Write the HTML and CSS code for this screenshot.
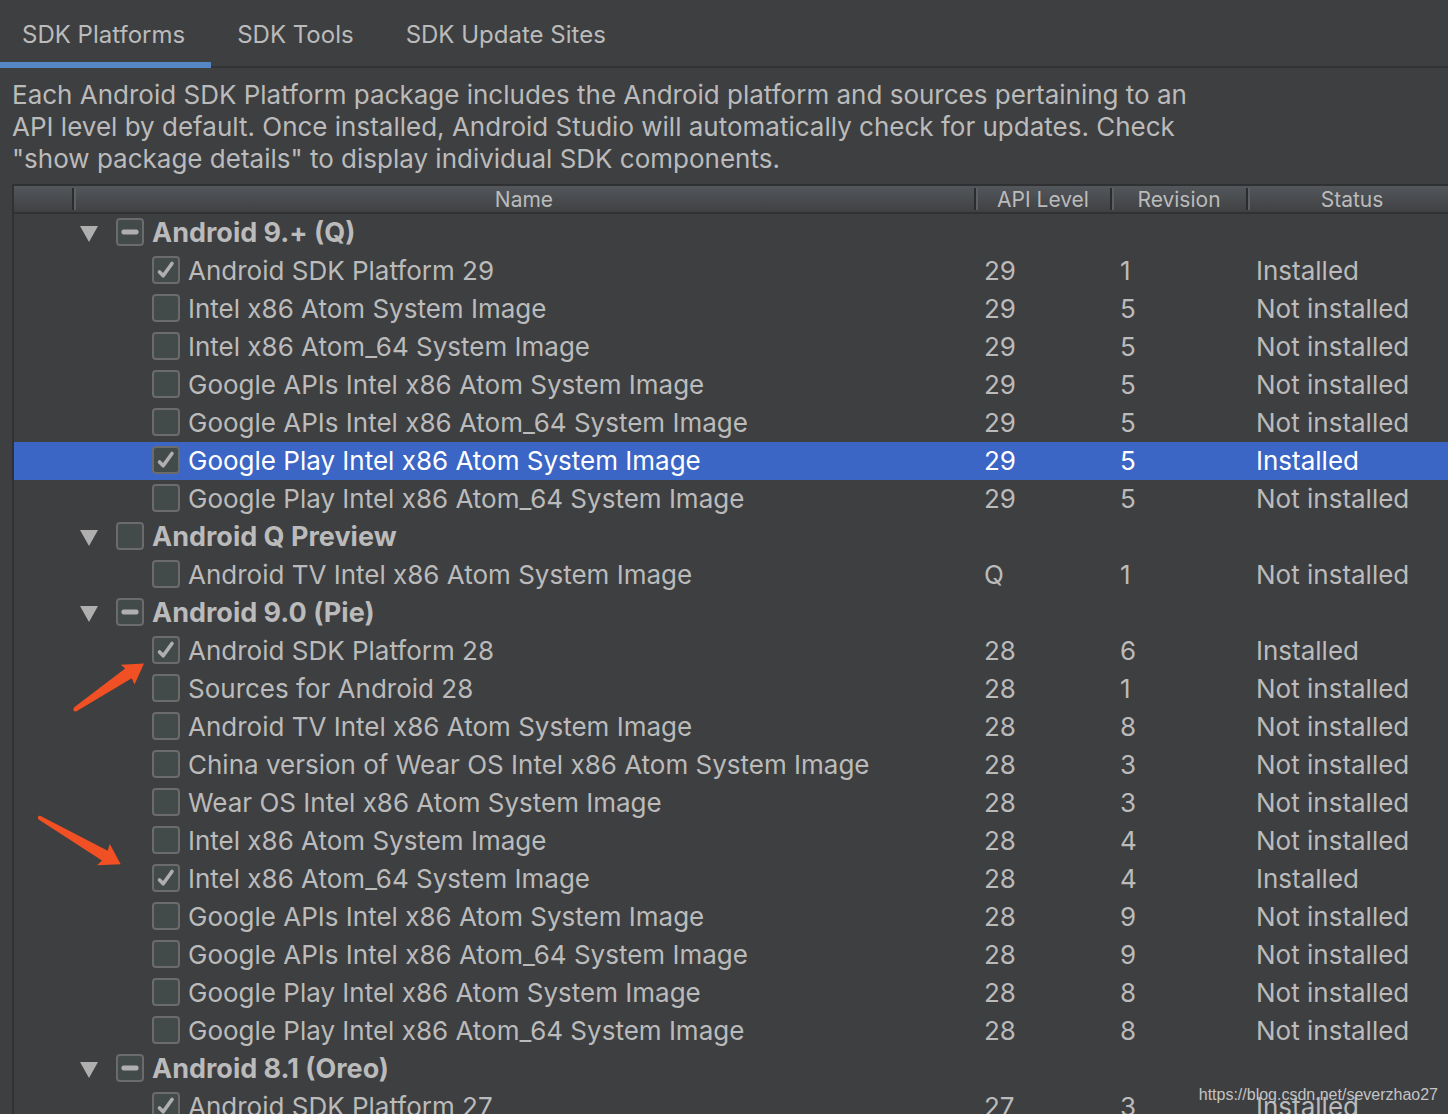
FILE: index.html
```html
<!DOCTYPE html>
<html lang="en">
<head>
<meta charset="utf-8">
<title>Android SDK</title>
<link rel="stylesheet" href="styles.css">
</head>
<body>
<main class="panel">
  <div class="tabs" role="tablist">
    <button class="tab tab-active" role="tab" aria-selected="true">SDK Platforms</button>
    <button class="tab" role="tab" aria-selected="false">SDK Tools</button>
    <button class="tab" role="tab" aria-selected="false">SDK Update Sites</button>
  </div>
  <p class="intro">Each Android SDK Platform package includes the Android platform and sources pertaining to an API level by default. Once installed, Android Studio will automatically check for updates. Check "show package details" to display individual SDK components.</p>
  <div class="table-frame">
    <table class="packages">
      <colgroup><col class="col-gutter"><col><col class="col-api"><col class="col-revision"><col class="col-status"></colgroup>
      <thead>
        <tr><th></th><th>Name</th><th>API Level</th><th>Revision</th><th>Status</th></tr>
      </thead>
      <tbody id="rows"></tbody>
    </table>
  </div>
</main>
<svg class="arrow arrow-platform" width="80" height="56" viewBox="0 0 80 56" aria-hidden="true"><path d="M74 7.5 50.700 8.700 55.200 12.400 4.200 51.200Q2.600 53 3.600 54.600 4.800 56 6.500 55.200L61.700 22.200 64.500 28.500Z"/></svg>
<svg class="arrow arrow-image" width="90" height="56" viewBox="0 0 90 56" aria-hidden="true"><path d="M85.700 52.300 74.700 31.700 72.700 38.700 5.200 3.800Q3.600 3.400 2.900 4.900 2.500 6.300 3.600 7.400L67 48.400 62 53.300Z"/></svg>
<div class="watermark">https://blog.csdn.net/severzhao27</div>
<script src="rows.js"></script>
</body>
</html>
```
FILE: rows.js
```js
const groups = [
  { name: "Android 9.+ (Q)", mixed: true, items: [
    ["Android SDK Platform 29", "29", 1, true],
    ["Intel x86 Atom System Image", "29", 5],
    ["Intel x86 Atom_64 System Image", "29", 5],
    ["Google APIs Intel x86 Atom System Image", "29", 5],
    ["Google APIs Intel x86 Atom_64 System Image", "29", 5],
    ["Google Play Intel x86 Atom System Image", "29", 5, true, true],
    ["Google Play Intel x86 Atom_64 System Image", "29", 5]
  ] },
  { name: "Android Q Preview", mixed: false, items: [
    ["Android TV Intel x86 Atom System Image", "Q", 1]
  ] },
  { name: "Android 9.0 (Pie)", mixed: true, items: [
    ["Android SDK Platform 28", "28", 6, true],
    ["Sources for Android 28", "28", 1],
    ["Android TV Intel x86 Atom System Image", "28", 8],
    ["China version of Wear OS Intel x86 Atom System Image", "28", 3],
    ["Wear OS Intel x86 Atom System Image", "28", 3],
    ["Intel x86 Atom System Image", "28", 4],
    ["Intel x86 Atom_64 System Image", "28", 4, true],
    ["Google APIs Intel x86 Atom System Image", "28", 9],
    ["Google APIs Intel x86 Atom_64 System Image", "28", 9],
    ["Google Play Intel x86 Atom System Image", "28", 8],
    ["Google Play Intel x86 Atom_64 System Image", "28", 8]
  ] },
  { name: "Android 8.1 (Oreo)", mixed: true, items: [
    ["Android SDK Platform 27", "27", 3, true]
  ] }
];

const triangle = '<svg width="18" height="16" viewBox="0 0 18 16"><path d="M0 0H18L9 16Z"/></svg>';
let html = "";
groups.forEach((group, g) => {
  html += `<tr class="group"><td></td><td><div class="name"><button class="toggle" aria-label="Collapse" aria-expanded="true">${triangle}</button>` +
    `<input class="check" type="checkbox" id="g${g}"${group.mixed ? ' data-mixed' : ''}><label for="g${g}">${group.name}</label></div></td><td></td><td></td><td></td></tr>`;
  group.items.forEach(([name, api, revision, installed, selected], i) => {
    const id = `p${g}-${i}`;
    html += `<tr${selected ? ' class="selected"' : ''}><td></td><td><div class="name child"><input class="check" type="checkbox" id="${id}"${installed ? ' checked' : ''}>` +
      `<label for="${id}">${name}</label></div></td><td>${api}</td><td>${revision}</td><td>${installed ? 'Installed' : 'Not installed'}</td></tr>`;
  });
});
document.getElementById("rows").innerHTML = html;
document.querySelectorAll("[data-mixed]").forEach(box => { box.indeterminate = true; });
```
FILE: styles.css
```css
* { box-sizing: border-box; }

body {
  margin: 0;
  height: 100vh;
  overflow: hidden;
  position: relative;
  background: #3e3f41;
  color: #bbbbbb;
  font-family: Inter, "Liberation Sans", sans-serif;
  font-size: 26px;
}

.panel { height: 100%; overflow: hidden; }

.tabs {
  display: flex;
  height: 68px;
  border-bottom: 2px solid #323335;
}

.tab {
  height: 68px;
  padding: 0 26px;
  border: 0;
  background: none;
  color: inherit;
  font-family: inherit;
  font-size: 24px;
  white-space: nowrap;
}

.tab-active {
  padding-left: 22px;
  box-shadow: inset 0 -6px #5587c5;
}

.intro {
  max-width: 1224px;
  margin: 0;
  padding: 11px 12px 9px;
  line-height: 32px;
}

.table-frame {
  margin-left: 12px;
  border: solid #303133;
  border-width: 2px 0 0 2px;
  overflow: hidden;
}

.packages {
  width: calc(100% + 8px);
  table-layout: fixed;
  border-collapse: separate;
  border-spacing: 0;
}

.col-gutter { width: 58px; }
.col-api, .col-revision { width: 136px; }
.col-status { width: 210px; }

thead tr { background: linear-gradient(#53575b, #3e3f41); }

th {
  height: 28px;
  padding: 2px 0 0 2px;
  border-bottom: 2px solid #303133;
  font-size: 21px;
  font-weight: 400;
  line-height: 24px;
  background: linear-gradient(90deg, #2b2c2e 2px, #5d6063 2px) left 2px / 4px 22px no-repeat;
}

th:first-child { background: none; }

td {
  height: 38px;
  padding: 0 0 0 10px;
  line-height: 38px;
  white-space: nowrap;
}

td:nth-child(2) { padding-left: 8px; }

.name {
  display: flex;
  align-items: center;
  height: 38px;
}

.child { padding-left: 72px; }
.group { font-size: 27px; font-weight: 700; }

.selected {
  background: #3b66c5;
  color: #ffffff;
}

.toggle {
  display: flex;
  width: 36px;
  padding: 2px 0 0;
  border: 0;
  background: none;
  fill: #afafaf;
}

.check {
  appearance: none;
  flex: none;
  width: 28px;
  height: 28px;
  margin: 0 8px 2px 0;
  border: 2px solid #6b6b6b;
  border-radius: 4px;
  background: #434a4a;
}

.check:checked {
  background-image: url("data:image/svg+xml,%3Csvg xmlns='http://www.w3.org/2000/svg' viewBox='0 0 24 24'%3E%3Cpath d='M5.500 14 9.200 17.800 18 5.500' fill='none' stroke='%23afafaf' stroke-width='3.600' stroke-linecap='round' stroke-linejoin='round'/%3E%3C/svg%3E");
}

.check:indeterminate {
  background-image: url("data:image/svg+xml,%3Csvg xmlns='http://www.w3.org/2000/svg' viewBox='0 0 24 24'%3E%3Crect x='3.500' y='9.500' width='17' height='5' rx='2' fill='%23afafaf'/%3E%3C/svg%3E");
}

.arrow {
  position: absolute;
  fill: #f05023;
}

.arrow-platform { left: 70px; top: 656px; }
.arrow-image { left: 35px; top: 812px; }

.watermark {
  position: absolute;
  right: 10px;
  bottom: 9px;
  color: #c4c4c4;
  font: 16px/20px "Liberation Sans", sans-serif;
}
```
